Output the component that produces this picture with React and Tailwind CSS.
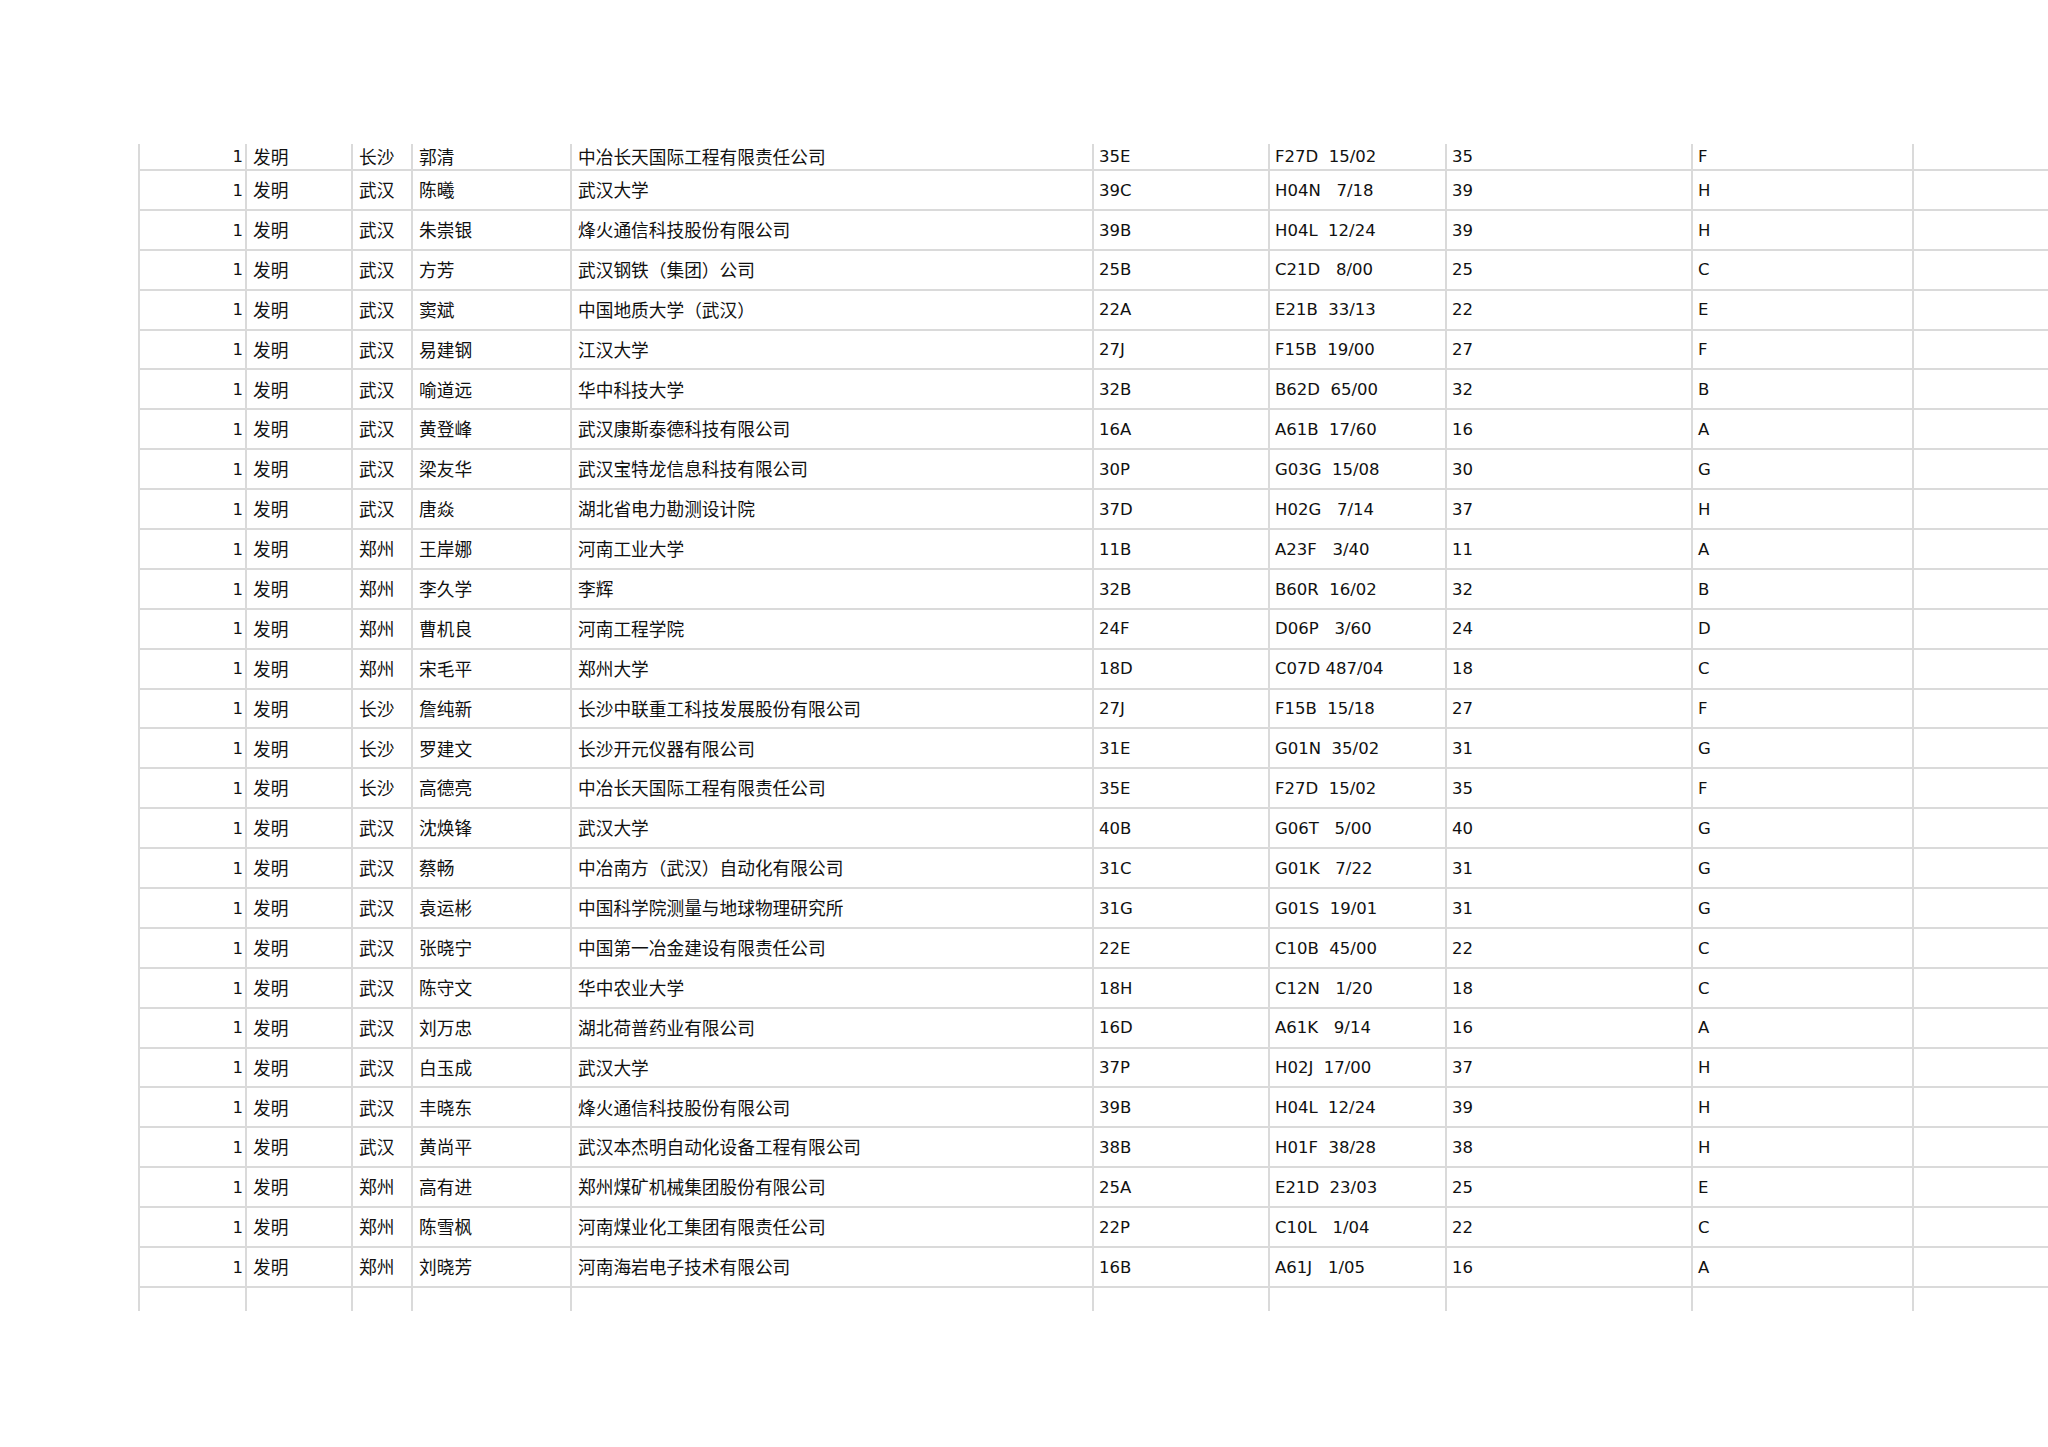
import React from "react";

const rows = [
  ["长沙", "郭清", "中冶长天国际工程有限责任公司", "35E", "F27D  15/02", "35", "F"],
  ["武汉", "陈曦", "武汉大学", "39C", "H04N   7/18", "39", "H"],
  ["武汉", "朱崇银", "烽火通信科技股份有限公司", "39B", "H04L  12/24", "39", "H"],
  ["武汉", "方芳", "武汉钢铁（集团）公司", "25B", "C21D   8/00", "25", "C"],
  ["武汉", "窦斌", "中国地质大学（武汉）", "22A", "E21B  33/13", "22", "E"],
  ["武汉", "易建钢", "江汉大学", "27J", "F15B  19/00", "27", "F"],
  ["武汉", "喻道远", "华中科技大学", "32B", "B62D  65/00", "32", "B"],
  ["武汉", "黄登峰", "武汉康斯泰德科技有限公司", "16A", "A61B  17/60", "16", "A"],
  ["武汉", "梁友华", "武汉宝特龙信息科技有限公司", "30P", "G03G  15/08", "30", "G"],
  ["武汉", "唐焱", "湖北省电力勘测设计院", "37D", "H02G   7/14", "37", "H"],
  ["郑州", "王岸娜", "河南工业大学", "11B", "A23F   3/40", "11", "A"],
  ["郑州", "李久学", "李辉", "32B", "B60R  16/02", "32", "B"],
  ["郑州", "曹机良", "河南工程学院", "24F", "D06P   3/60", "24", "D"],
  ["郑州", "宋毛平", "郑州大学", "18D", "C07D 487/04", "18", "C"],
  ["长沙", "詹纯新", "长沙中联重工科技发展股份有限公司", "27J", "F15B  15/18", "27", "F"],
  ["长沙", "罗建文", "长沙开元仪器有限公司", "31E", "G01N  35/02", "31", "G"],
  ["长沙", "高德亮", "中冶长天国际工程有限责任公司", "35E", "F27D  15/02", "35", "F"],
  ["武汉", "沈焕锋", "武汉大学", "40B", "G06T   5/00", "40", "G"],
  ["武汉", "蔡畅", "中冶南方（武汉）自动化有限公司", "31C", "G01K   7/22", "31", "G"],
  ["武汉", "袁运彬", "中国科学院测量与地球物理研究所", "31G", "G01S  19/01", "31", "G"],
  ["武汉", "张晓宁", "中国第一冶金建设有限责任公司", "22E", "C10B  45/00", "22", "C"],
  ["武汉", "陈守文", "华中农业大学", "18H", "C12N   1/20", "18", "C"],
  ["武汉", "刘万忠", "湖北荷普药业有限公司", "16D", "A61K   9/14", "16", "A"],
  ["武汉", "白玉成", "武汉大学", "37P", "H02J  17/00", "37", "H"],
  ["武汉", "丰晓东", "烽火通信科技股份有限公司", "39B", "H04L  12/24", "39", "H"],
  ["武汉", "黄尚平", "武汉本杰明自动化设备工程有限公司", "38B", "H01F  38/28", "38", "H"],
  ["郑州", "高有进", "郑州煤矿机械集团股份有限公司", "25A", "E21D  23/03", "25", "E"],
  ["郑州", "陈雪枫", "河南煤业化工集团有限责任公司", "22P", "C10L   1/04", "22", "C"],
  ["郑州", "刘晓芳", "河南海岩电子技术有限公司", "16B", "A61J   1/05", "16", "A"],
];

const cjk = "font-['Noto_Sans_CJK_SC',sans-serif] text-[17.7px] pl-[6px]";
const latin =
  "font-['DejaVu_Sans',sans-serif] text-[16.5px] pl-[5px] pt-[2px] whitespace-pre";

const Cell = ({ className = "", last, children }) => (
  <div
    className={`flex items-center leading-none border-l-2 border-[#dadada] ${
      last ? "border-r-2" : ""
    } ${className}`}
  >
    {children}
  </div>
);

const Row = ({ data, height, bottom = true }) => {
  const [city, name, org, code, ipc, num, letter] = data || [];
  return (
    <div
      className={`flex ${height} ${bottom ? "border-b-2 border-[#dadada]" : ""}`}
    >
      <Cell className="w-[107px] justify-end pr-[2px] pt-[2px] font-['DejaVu_Sans',sans-serif] text-[16.5px]">
        {data ? "1" : ""}
      </Cell>
      <Cell className={`w-[106px] ${cjk}`}>{data ? "发明" : ""}</Cell>
      <Cell className={`w-[60px] ${cjk}`}>{city}</Cell>
      <Cell className={`w-[159px] ${cjk}`}>{name}</Cell>
      <Cell className={`w-[522px] ${cjk}`}>{org}</Cell>
      <Cell className={`w-[176px] ${latin}`}>{code}</Cell>
      <Cell className={`w-[177px] ${latin}`}>{ipc}</Cell>
      <Cell className={`w-[246px] ${latin}`}>{num}</Cell>
      <Cell className={`w-[223px] ${latin}`} last>
        {letter}
      </Cell>
    </div>
  );
};

const App = () => {
  return (
    <div className="w-[2048px] h-[1447px] bg-white text-[#111] overflow-hidden">
      <div className="ml-[138px] pt-[144px] flex flex-col">
        {rows.map((r, i) => (
          <Row
            key={i}
            data={r}
            height={i === 0 ? "h-[27px]" : "h-[39.9px]"}
          />
        ))}
        <Row height="h-[23px]" bottom={false} />
      </div>
    </div>
  );
};

export default App;
